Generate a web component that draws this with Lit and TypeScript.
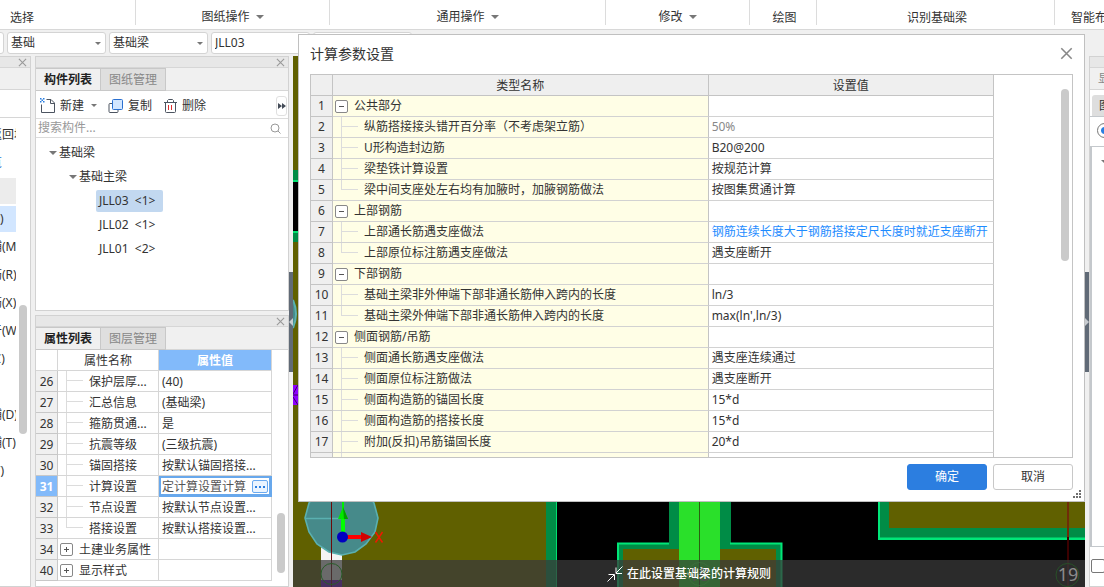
import { LitElement, html, css, svg, nothing } from "lit";
import { customElement, state } from "lit/decorators.js";
import { classMap } from "lit/directives/class-map.js";

type Row = { no: number; name: string; value?: string; group?: boolean; last?: boolean; tone?: string };

const PARAMS: Row[] = [
  { no: 1, name: "公共部分", group: true },
  { no: 2, name: "纵筋搭接接头错开百分率（不考虑架立筋）", value: "50%", tone: "muted" },
  { no: 3, name: "U形构造封边筋", value: "B20@200" },
  { no: 4, name: "梁垫铁计算设置", value: "按规范计算" },
  { no: 5, name: "梁中间支座处左右均有加腋时，加腋钢筋做法", value: "按图集贯通计算", last: true },
  { no: 6, name: "上部钢筋", group: true },
  { no: 7, name: "上部通长筋遇支座做法", value: "钢筋连续长度大于钢筋搭接定尺长度时就近支座断开", tone: "changed" },
  { no: 8, name: "上部原位标注筋遇支座做法", value: "遇支座断开", last: true },
  { no: 9, name: "下部钢筋", group: true },
  { no: 10, name: "基础主梁非外伸端下部非通长筋伸入跨内的长度", value: "ln/3" },
  { no: 11, name: "基础主梁外伸端下部非通长筋伸入跨内的长度", value: "max(ln',ln/3)", last: true },
  { no: 12, name: "侧面钢筋/吊筋", group: true },
  { no: 13, name: "侧面通长筋遇支座做法", value: "遇支座连续通过" },
  { no: 14, name: "侧面原位标注筋做法", value: "遇支座断开" },
  { no: 15, name: "侧面构造筋的锚固长度", value: "15*d" },
  { no: 16, name: "侧面构造筋的搭接长度", value: "15*d" },
  { no: 17, name: "附加(反扣)吊筋锚固长度", value: "20*d" },
];

const PROPS: Row[] = [
  { no: 26, name: "保护层厚...", value: "(40)" },
  { no: 27, name: "汇总信息", value: "(基础梁)" },
  { no: 28, name: "箍筋贯通...", value: "是" },
  { no: 29, name: "抗震等级", value: "(三级抗震)" },
  { no: 30, name: "锚固搭接", value: "按默认锚固搭接..." },
  { no: 31, name: "计算设置", value: "定计算设置计算" },
  { no: 32, name: "节点设置", value: "按默认节点设置..." },
  { no: 33, name: "搭接设置", value: "按默认搭接设置...", last: true },
  { no: 34, name: "土建业务属性", group: true },
  { no: 40, name: "显示样式", group: true },
];

const RIBBON = [
  { label: "选择", cls: "g-select" },
  { label: "图纸操作", cls: "g-drawing", menu: true },
  { label: "通用操作", cls: "g-common", menu: true },
  { label: "修改", cls: "g-modify", menu: true },
  { label: "绘图", cls: "g-draw" },
  { label: "识别基础梁", cls: "g-detect" },
  { label: "智能布置", cls: "g-smart" },
];

const TOOLS = [
  { text: "返回块", tone: "" },
  { text: "览", tone: "link" },
  { text: "", tone: "section" },
  { text: "(F)", tone: "current" },
  { text: "辅(M)", tone: "" },
  { text: "筋(R)", tone: "" },
  { text: "筋(X)", tone: "" },
  { text: "于(W)", tone: "" },
  { text: "(C)", tone: "" },
  { text: "", tone: "" },
  { text: "辅(D)", tone: "" },
  { text: "辅(T)", tone: "" },
  { text: "(Y)", tone: "" },
];

const cross = (size: number) => html`<svg width=${size} height=${size} viewBox="0 0 10 10" aria-hidden="true">
  <path d="M1 1L9 9M9 1L1 9" stroke="currentColor" stroke-width="1.2" fill="none" />
</svg>`;

const scene = svg`
  <rect x="293" y="56" width="792" height="531" fill="#606000" />
  <rect x="293" y="170" width="6" height="72" fill="#008c46" />
  <rect x="293" y="180" width="6" height="53" fill="#00e070" />
  <rect x="293" y="182" width="6" height="49" fill="#000" />
  <path d="M293 300Q299 314 293 328" fill="#468a8a" stroke="#5ab0b0" stroke-width="2" />
  <rect x="293" y="385" width="6" height="20" fill="#8c00ff" />
  <path d="M293 395H299M298 385L293 394M293 397L298 405" stroke="#400060" fill="none" />
  <rect x="546" y="480" width="11" height="107" fill="#008c46" />
  <rect x="557" y="480" width="321" height="107" fill="#000" />
  <rect x="556" y="480" width="1" height="107" fill="#00e070" />
  <path d="M618 587V543H669V480H731V543H782V587Z" fill="#008c46" />
  <path d="M618 587V543.5H669M730 543.5H781.5V587" fill="none" stroke="#00e678" stroke-width="2" />
  <rect x="623" y="549" width="153" height="38" fill="#606000" />
  <rect x="679" y="480" width="41" height="107" fill="#2ae02a" />
  <path d="M699.5 480V587" stroke="#2a6010" stroke-width="1" />
  <rect x="878" y="480" width="207" height="107" fill="#000" />
  <path d="M878 480H1085V540H878Z" fill="#00e678" />
  <path d="M880 480H1085V537.5H880Z" fill="#008c46" />
  <rect x="889" y="480" width="196" height="48" fill="#606000" />
  <path d="M1068 480V537" stroke="#702c08" stroke-width="2" />
  <path d="M1068 537V587" stroke="#3c0000" stroke-width="2" />
  <rect x="321" y="545" width="21" height="42" fill="#f4f4f4" />
  <rect x="321" y="580" width="21" height="7" fill="#7010d0" />
  <path d="M305 518L309 503L318 490H365L374 503L378 518L375 532L366 544L355 552L342 555L329 552L317 544L309 532Z"
    fill="#468a8a" stroke="#5ab0b0" stroke-width="1.6" />
  <path d="M305 518.5H343" stroke="#5ab0b0" stroke-width="1.6" />
  <path d="M331.5 480V587" stroke="#6c0a0a" />
  <path d="M343 480V512" stroke="#00f000" stroke-width="2" />
  <path d="M341 517H345V532H341Z" fill="#00ff00" />
  <path d="M343 507L348 519H338Z" fill="#00e800" />
  <path d="M343 507L348 519H344Z" fill="#00a000" />
  <path d="M347 535H362V539H347Z" fill="#ff0000" />
  <path d="M361 532L372 537L361 542Z" fill="#d00000" />
  <circle cx="342.500" cy="537" r="5.500" fill="#0000c0" />
  <path d="M375.500 532L382.500 542.500M382.500 532L375.500 542.500" stroke="#f01800" stroke-width="1.500" />
`;

@customElement("app-root")
export class AppRoot extends LitElement {
  @state() private component = "JLL03";

  static styles = css`
    :host {
      display: block;
      font: 12px/20px "Noto Sans", "Noto Sans CJK SC", sans-serif;
      color: #333;
    }
    * { box-sizing: border-box; }
    svg { display: block; flex: none; }
    button, input, select { font: inherit; color: inherit; margin: 0; padding: 0; border: 0; background: none; }
    table { border-collapse: separate; border-spacing: 0; table-layout: fixed; }
    th, td { padding: 0; font-weight: 400; white-space: nowrap; overflow: hidden; }
    ul { list-style: none; margin: 0; padding: 0; }
    .app { display: flex; flex-direction: column; height: 100vh; overflow: hidden; background: #f0f0f0; position: relative; }

    .ribbon { display: flex; height: 30px; flex: none; background: #fff; border-bottom: 1px solid #d8d8d8; }
    .ribbon button { display: flex; align-items: center; justify-content: center; gap: 6px; height: 25px; padding-top: 8px; border-right: 1px solid #dcdcdc; flex: none; white-space: nowrap; overflow: hidden; }
    .ribbon .g-select { width: 136px; justify-content: flex-start; padding-left: 10px; }
    .ribbon .g-drawing { width: 194px; }
    .ribbon .g-common { width: 276px; }
    .ribbon .g-modify { width: 144px; }
    .ribbon .g-draw { width: 67px; padding-left: 3px; }
    .ribbon .g-detect { flex: 1; padding-left: 3px; }
    .ribbon .g-smart { width: 49px; justify-content: flex-start; padding-left: 16px; border: 0; }
    .ribbon .g-select, .ribbon .g-draw, .ribbon .g-detect, .ribbon .g-smart { padding-top: 10px; }
    .caret { width: 0; border: 4px solid transparent; border-top-color: #777; border-bottom: 0; }
    .caret.small { border-width: 3px; border-bottom: 0; }

    .combos { display: flex; gap: 3px; height: 26px; flex: none; padding-top: 2px; }
    .combo { display: flex; align-items: center; width: 99px; height: 22px; flex: none; border: 1px solid #d4d4d4; border-radius: 3px; background: #fff; padding-right: 4px; }
    .combo.cut { margin-left: -95px; }
    .combo select { appearance: none; flex: 1; min-width: 0; height: 20px; padding-left: 3px; outline: 0; }

    .work { display: flex; flex: 1; min-height: 0; }
    .panel { display: flex; flex-direction: column; background: #fff; border: 1px solid #d2d2d2; min-height: 0; }
    .bar { display: flex; justify-content: flex-end; align-items: center; height: 11px; flex: none; background: #e7e7e7; border-bottom: 1px solid #d6d6d6; padding-right: 3px; color: #999; }
    .bar button { height: 9px; width: 9px; }

    .tools { width: 31px; flex: none; border-left: 0; overflow: hidden; }
    .tools .band { height: 22px; flex: none; background: #f0f0f0; border-bottom: 1px solid #d6d6d6; }
    .tools .blank { height: 28px; flex: none; border-bottom: 1px solid #d6d6d6; }
    .tools .body { display: flex; flex: 1; justify-content: space-between; padding: 4px 3px 0 0; min-height: 0; }
    .tools ul { width: 16px; overflow: hidden; }
    .tools li { height: 26px; line-height: 26px; margin-bottom: 2px; white-space: nowrap; }
    .tools li span { margin-left: -10px; }
    .tools .link { color: #1e78d2; }
    .tools .section { background: #ececec; }
    .tools .current { background: #d2e6ff; }
    .thumb { width: 8px; border-radius: 4px; background: #cacaca; flex: none; }
    .tools .thumb { height: 129px; margin-top: 183px; }

    .dock { display: flex; flex-direction: column; gap: 4px; width: 254px; margin-left: 4px; flex: none; }
    .components { flex: 1; }
    .properties { flex: none; }
    .tabs { display: flex; height: 23px; flex: none; background: #f0f0f0; border-bottom: 1px solid #d6d6d6; }
    .tabs button { width: 65px; height: 23px; border: 1px solid #c8c8c8; border-left: 0; background: #dfdfdf; color: #888; }
    .tabs button.on { background: #f0f0f0; color: #222; font-weight: 700; }
    .toolbar { display: flex; align-items: center; height: 28px; flex: none; padding: 2px 1px 0 4px; border-bottom: 1px solid #dcdcdc; }
    .toolbar button { display: flex; align-items: center; gap: 4px; margin-right: 11px; white-space: nowrap; }
    .toolbar .caret { margin-left: 3px; }
    .toolbar .more { justify-content: center; width: 11px; height: 20px; margin: 0 0 0 auto; border: 1px solid #e0e0e0; border-radius: 3px; }
    .search { display: flex; align-items: center; height: 19px; flex: none; padding: 0 7px 0 2px; border-bottom: 1px solid #dcdcdc; }
    .search input { flex: 1; min-width: 0; height: 18px; outline: 0; }
    .search input::placeholder { color: #999; opacity: 1; }
    .tree { padding-top: 3px; flex: 1; }
    .tree li > div { display: flex; align-items: center; height: 24px; gap: 2px; padding-left: 13px; }
    .tree .lv2 > div { padding-left: 33px; }
    .tree .lv3 { padding-left: 60px; height: 24px; }
    .tree .lv3 button { height: 22px; padding: 0 8px 0 3px; margin-top: 1px; border-radius: 2px; white-space: pre; }
    .tree .lv3 button.on { background: #c2d8f0; }

    .props-body { display: flex; justify-content: space-between; padding: 0 3px 5px 0; }
    .props { width: 236px; }
    .props .c-no { width: 22px; }
    .props .c-name { width: 101px; }
    .props th, .props td { height: 21px; line-height: 19px; padding-top: 1px; border-right: 1px solid #d6d6d6; border-bottom: 1px solid #d6d6d6; }
    .props tbody th { background: #f0f0f0; border-color: #c8c8c8; }
    .props .picked { background: #82bafa; color: #fff; font-weight: 700; }
    .props .val { padding-left: 3px; }
    .props tr.active th { background: #82bafa; color: #fff; font-weight: 700; }
    .props tr.active .val { box-shadow: inset 0 0 0 2px #68a8ec; color: #555; border-color: #68a8ec; }
    .edit { display: flex; align-items: center; justify-content: space-between; padding-right: 3px; }
    .edit button { display: flex; align-items: center; justify-content: center; width: 16px; height: 13px; border: 1px solid #6aaaf0; border-radius: 2px; background: #eaf4ff; }
    .props .child { padding-left: 31px; }
    .props .group { padding-left: 2px; }
    .props .group .in { gap: 6px; }
    .props-body .thumb { height: 60px; align-self: flex-end; margin-bottom: 8px; }
    .child {
      background-image: linear-gradient(#dcdcdc, #dcdcdc), linear-gradient(#dcdcdc, #dcdcdc);
      background-repeat: no-repeat;
      background-position: 8px 0, 8px 9px;
      background-size: 1px 100%, 17px 1px;
    }
    .child.last { background-size: 1px 10px, 17px 1px; }
    .in { display: flex; align-items: center; }
    .box { width: 13px; height: 13px; border: 1px solid #888; border-radius: 2px; display: flex; align-items: center; justify-content: center; background: #fff; flex: none; }

    .split { display: flex; align-items: center; width: 4px; flex: none; }
    .split button { width: 4px; height: 100px; background: #606a76; display: flex; align-items: center; }
    .canvas { flex: 1; min-width: 0; position: relative; overflow: hidden; background: #606000; }
    .scene { width: 100%; height: 100%; }
    .hint { position: absolute; left: 0; right: 0; bottom: 0; height: 27px; display: flex; align-items: center; justify-content: center; gap: 4px; background: rgba(58, 58, 58, 0.74); color: #fff; font-weight: 500; }
    .marks { position: absolute; left: 0; right: 0; bottom: 0; width: 100%; height: 27px; }
    .marks text { font-size: 18px; fill: #8c8c8c; }

    .side { width: 15px; flex: none; border-right: 0; overflow: hidden; }
    .side .cap { height: 22px; flex: none; padding-left: 8px; line-height: 22px; background: #f0f0f0; border-bottom: 1px solid #d6d6d6; color: #888; white-space: nowrap; overflow: hidden; }
    .side .tab { display: flex; height: 27px; flex: none; padding: 5px 0 0 2px; border-bottom: 1px solid #c4c8cc; }
    .side .tab button { padding-left: 7px; flex: none; width: 60px; text-align: left; background: #dedede; border-radius: 3px 3px 0 0; }
    .side .pick { height: 29px; flex: none; padding: 6px 0 0 7px; }
    .side input { display: block; appearance: none; border: 1px solid #777; background: #fff; }
    .side input[type="radio"] { width: 15px; height: 15px; border-radius: 50%; background: radial-gradient(circle, #2a7ee0 3px, #fff 4px); }
    .side .list { flex: 1; border: 1px solid #c4c8cc; border-left-width: 2px; border-right: 0; padding: 13px 0 0 9px; }
    .side .list .caret { display: block; }
    .side .foot { height: 39px; flex: none; padding: 12px 0 0 1px; }
    .side input[type="checkbox"] { width: 14px; height: 14px; border-radius: 2px; }

    .dialog { position: absolute; left: 298px; right: 19px; top: 34px; margin: 0; display: flex; flex-direction: column; background: #fff; border: 1px solid #c0c0c0; padding: 0 11px; }
    .dialog header { display: flex; justify-content: space-between; align-items: center; height: 39px; padding-bottom: 2px; }
    .dialog h1 { margin: 0; font-size: 14px; font-weight: 400; }
    .dialog header button { color: #888; }
    .sheet { display: flex; height: 384px; border: 1px solid #c4c4c4; overflow: hidden; padding-right: 3px; gap: 67px; }
    .grid { flex: 1; min-width: 0; }
    .params { width: 100%; }
    .params .c-no { width: 22px; }
    .params .c-name { width: 55%; }
    .params th, .params td { height: 21px; border-right: 1px solid #c4c4c4; border-bottom: 1px solid #d2d2d2; }
    .params thead th { line-height: 19px; padding-top: 1px; background: #efefef; border-color: #c4c4c4; }
    .params tbody th { background: #efefef; border-color: #c4c4c4; }
    .params .child, .params .group { background-color: #fffee6; }
    .params .child { padding-left: 31px; }
    .params .group { padding-left: 2px; }
    .params .group .in { gap: 6px; }
    .params .val { padding-left: 3px; }
    .muted { color: #888; }
    .changed { color: #1e8cff; }
    .sheet .thumb { height: 172px; margin-top: 14px; }
    .dialog footer { display: flex; justify-content: flex-end; gap: 6px; padding: 6px 0 11px; }
    .dialog footer button { width: 80px; height: 26px; border: 1px solid #c8c8c8; border-radius: 3px; }
    .dialog footer .ok { background: #2c7ee0; border-color: #2c7ee0; color: #fff; }
    .grip { position: absolute; right: 2px; bottom: 2px; }
  `;

  private nameCell(r: Row, open: boolean) {
    if (r.group) {
      return html`<td class="group"><div class="in">
        <button class="box" aria-label=${open ? "收起" : "展开"}>
          <svg width="7" height="7" viewBox="0 0 7 7">
            <path d=${open ? "M1 3.5H6" : "M1 3.5H6M3.5 1V6"} stroke="#555" fill="none" />
          </svg>
        </button>${r.name}</div></td>`;
    }
    return html`<td class=${classMap({ child: true, last: !!r.last })}>${r.name}</td>`;
  }

  private combo(label: string, value: string, cut = false) {
    return html`<div class=${classMap({ combo: true, cut })}>
      <select aria-label=${label}><option>${value}</option></select>
      <span class="caret small"></span>
    </div>`;
  }

  private bar() {
    return html`<div class="bar"><button aria-label="关闭">${cross(9)}</button></div>`;
  }

  private toolPanel() {
    return html`<aside class="panel tools">
      ${this.bar()}
      <div class="band"></div>
      <div class="blank"></div>
      <div class="body">
        <ul>${TOOLS.map((t) => html`<li class=${t.tone}><span>${t.text}</span></li>`)}</ul>
        <div class="thumb"></div>
      </div>
    </aside>`;
  }

  private componentPanel() {
    return html`<section class="panel components">
      ${this.bar()}
      <div class="tabs"><button class="on">构件列表</button><button>图纸管理</button></div>
      <div class="toolbar">
        <button>
          <svg width="16" height="16" viewBox="0 0 16 16" fill="none">
            <path d="M6.500 1.500H11L14.500 5V14.500H1.500V6.500M10.500 1.500V5.500H14.500" stroke="#4c5460" />
            <path d="M0 0H1.500V1.500H3V0H4.500V1.500H3V3H4.500V4.500H3V3H1.500V4.500H0V3H1.500V1.500H0Z" fill="#2a7ee0" />
          </svg>新建<span class="caret small"></span>
        </button>
        <button>
          <svg width="16" height="16" viewBox="0 0 16 16" fill="none">
            <path d="M4.500 5.500H2Q1 5.500 1 6.500V13.500Q1 14.500 2 14.500H9Q10 14.500 10 13.500V11.500" stroke="#4c5460" />
            <rect x="4.500" y="1.500" width="10" height="10" rx="1" fill="#d2e6ff" stroke="#2a70d0" />
          </svg>复制
        </button>
        <button>
          <svg width="15" height="16" viewBox="0 0 15 16" fill="none">
            <path d="M1 4.500H14M4.500 4V2.500L5.500 1.500H9.500L10.500 2.500V4M2.500 5V13.500Q2.500 14.500 3.500 14.500H11.500Q12.500 14.500 12.500 13.500V5" stroke="#4c5460" />
            <path d="M5.500 7V12M8.500 7V12" stroke="#e03030" />
          </svg>删除
        </button>
        <button class="more" aria-label="更多">
          <svg width="8" height="6" viewBox="0 0 8 6"><path d="M0 0L4 3L0 6ZM4 0L8 3L4 6Z" fill="#444c58" /></svg>
        </button>
      </div>
      <div class="search">
        <input type="search" aria-label="搜索构件" placeholder="搜索构件..." />
        <svg width="11" height="11" viewBox="0 0 11 11" fill="none" stroke="#999">
          <circle cx="5" cy="5" r="4" /><path d="M8 8L10.500 10.500" />
        </svg>
      </div>
      <ul class="tree">
        <li><div><span class="caret"></span>基础梁</div></li>
        <li class="lv2"><div><span class="caret"></span>基础主梁</div></li>
        ${[["JLL03", 1], ["JLL02", 1], ["JLL01", 2]].map(
          ([name, n]) => html`<li class="lv3">
            <button class=${this.component === name ? "on" : ""} @click=${() => (this.component = name as string)}>${name}  &lt;${n}&gt;</button>
          </li>`
        )}
      </ul>
    </section>`;
  }

  private propertyPanel() {
    return html`<section class="panel properties">
      ${this.bar()}
      <div class="tabs"><button class="on">属性列表</button><button>图层管理</button></div>
      <div class="props-body">
        <table class="props">
          <colgroup><col class="c-no" /><col class="c-name" /><col /></colgroup>
          <thead><tr><th></th><th>属性名称</th><th class="picked">属性值</th></tr></thead>
          <tbody>
            ${PROPS.map((r) => {
              const active = r.no === 31;
              return html`<tr class=${active ? "active" : ""}>
                <th scope="row">${r.no}</th>
                ${this.nameCell(r, false)}
                <td class="val">${active
                  ? html`<div class="edit">${r.value}<button aria-label="编辑">
                      <svg width="10" height="2" viewBox="0 0 10 2"><path d="M0 0H2V2H0ZM4 0H6V2H4ZM8 0H10V2H8Z" fill="#2a7ee0" /></svg>
                    </button></div>`
                  : r.value ?? nothing}</td>
              </tr>`;
            })}
          </tbody>
        </table>
        <div class="thumb"></div>
      </div>
    </section>`;
  }

  private canvas() {
    return html`<main class="canvas">
      <svg class="scene" viewBox="293 56 792 531" preserveAspectRatio="xMinYMax slice">${scene}</svg>
      <svg class="marks" viewBox="293 560 792 27" preserveAspectRatio="xMinYMax slice" fill="none">
        <text x="699" y="581" text-anchor="middle">18</text>
      </svg>
      <div class="hint">
        <svg width="16" height="16" viewBox="0 0 16 16" fill="none" stroke="#fff">
          <path d="M15.500 .5L9 7M9 1.500V7.500H15M.5 15.500L7 9M1.500 8.500H7.500V14" />
        </svg>在此设置基础梁的计算规则
      </div>
      <svg class="marks" viewBox="293 560 792 27" preserveAspectRatio="xMinYMax slice" fill="none">
        <circle cx="331.500" cy="574" r="10.500" stroke="#285c28" />
        <circle cx="699.500" cy="574" r="11.500" stroke="#3c6e3c" />
        <circle cx="1067.500" cy="575" r="11.500" stroke="#285028" />
        <text x="1068" y="581" text-anchor="middle">19</text>
      </svg>
    </main>`;
  }

  private sidePanel() {
    return html`<aside class="panel side">
      <div class="bar"></div>
      <div class="cap">显示设置</div>
      <div class="tab"><button>图元</button></div>
      <div class="pick"><input type="radio" checked aria-label="图元显示" /></div>
      <div class="list"><span class="caret"></span></div>
      <div class="foot"><input type="checkbox" aria-label="全部显示" /></div>
    </aside>`;
  }

  private dialog() {
    return html`<section class="dialog" role="dialog" aria-labelledby="dlg-title">
      <header><h1 id="dlg-title">计算参数设置</h1><button aria-label="关闭">${cross(13)}</button></header>
      <div class="sheet">
        <div class="grid">
          <table class="params">
            <colgroup><col class="c-no" /><col class="c-name" /><col /></colgroup>
            <thead><tr><th></th><th>类型名称</th><th>设置值</th></tr></thead>
            <tbody>
              ${PARAMS.map((r) => html`<tr>
                <th scope="row">${r.no}</th>
                ${this.nameCell(r, true)}
                <td class="val ${r.tone ?? ""}">${r.value ?? nothing}</td>
              </tr>`)}
              <tr><th></th><td class="child"></td><td class="val"></td></tr>
            </tbody>
          </table>
        </div>
        <div class="thumb"></div>
      </div>
      <footer><button class="ok">确定</button><button>取消</button></footer>
      <svg class="grip" width="9" height="9" viewBox="0 0 9 9" fill="#707070">
        <path d="M6 0H8V2H6ZM6 3H8V5H6ZM6 6H8V8H6ZM3 3H5V5H3ZM3 6H5V8H3ZM0 6H2V8H0Z" />
      </svg>
    </section>`;
  }

  render() {
    return html`<div class="app">
      <nav class="ribbon">
        ${RIBBON.map((g) => html`<button class=${g.cls}>${g.label}${g.menu ? html`<span class="caret"></span>` : nothing}</button>`)}
      </nav>
      <div class="combos">
        ${this.combo("楼层", "", true)}
        ${this.combo("构件大类", "基础")}
        ${this.combo("构件类型", "基础梁")}
        ${this.combo("构件", "JLL03")}
        ${this.combo("分层", "")}
      </div>
      <div class="work">
        ${this.toolPanel()}
        <div class="dock">${this.componentPanel()}${this.propertyPanel()}</div>
        <div class="split"><button aria-label="收起左侧"><svg width="4" height="8" viewBox="0 0 4 8"><path d="M4 0V8L0 4Z" fill="#c8ccd0" /></svg></button></div>
        ${this.canvas()}
        <div class="split"><button aria-label="收起右侧"><svg width="4" height="8" viewBox="0 0 4 8"><path d="M0 0V8L4 4Z" fill="#c8ccd0" /></svg></button></div>
        ${this.sidePanel()}
      </div>
      ${this.dialog()}
    </div>`;
  }
}
